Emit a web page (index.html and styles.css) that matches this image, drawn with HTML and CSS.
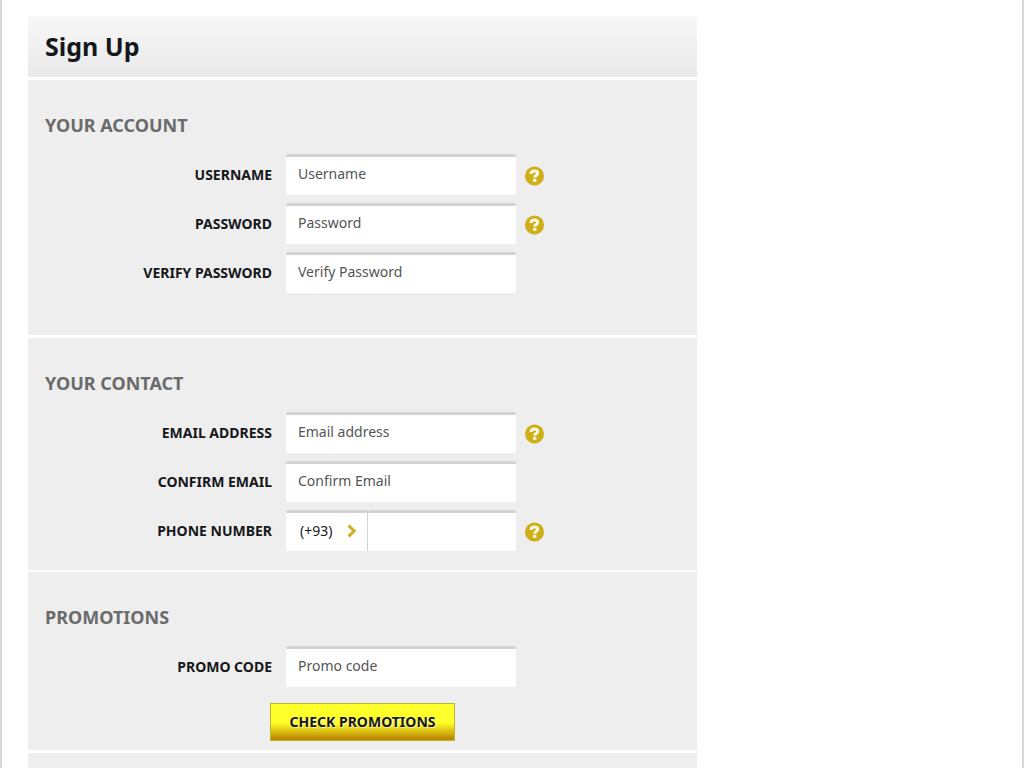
FILE: index.html
```html
<!DOCTYPE html>
<html lang="en">
<head>
<meta charset="utf-8">
<meta name="viewport" content="width=device-width, initial-scale=1">
<title>Sign Up</title>
<link rel="stylesheet" href="styles.css">
</head>
<body>
<svg class="sprite" aria-hidden="true">
  <symbol id="help" viewBox="0 0 20 20">
    <circle cx="10.5" cy="10" r="9.5" fill="#d0ae18"/>
    <path d="M7 8C7 5.8 8.5 5 10.4 5c2 0 3.3.9 3.3 2.5 0 2.1-3 2-3.1 4.1" fill="none" stroke="#fbf8e6" stroke-width="3"/>
    <path d="M9 12.8h3.4v3H9z" fill="#fbf8e6"/>
  </symbol>
</svg>
<main class="page">
  <form class="signup">
    <header class="title-bar"><h1 class="title">Sign Up</h1></header>

    <section class="panel panel-account">
      <h2 class="heading">YOUR ACCOUNT</h2>
      <div class="rows">
        <div class="row">
          <label class="label" for="username">USERNAME</label>
          <input class="field" id="username" type="text" placeholder="Username">
          <button class="help" type="button" aria-label="Username help"><svg class="help-icon"><use href="#help"/></svg></button>
        </div>
        <div class="row">
          <label class="label" for="password">PASSWORD</label>
          <input class="field" id="password" type="password" placeholder="Password">
          <button class="help" type="button" aria-label="Password help"><svg class="help-icon"><use href="#help"/></svg></button>
        </div>
        <div class="row">
          <label class="label" for="verify">VERIFY PASSWORD</label>
          <input class="field" id="verify" type="password" placeholder="Verify Password">
        </div>
      </div>
    </section>

    <section class="panel panel-contact">
      <h2 class="heading">YOUR CONTACT</h2>
      <div class="rows">
        <div class="row">
          <label class="label" for="email">EMAIL ADDRESS</label>
          <input class="field" id="email" type="email" placeholder="Email address">
          <button class="help" type="button" aria-label="Email help"><svg class="help-icon"><use href="#help"/></svg></button>
        </div>
        <div class="row">
          <label class="label" for="confirm">CONFIRM EMAIL</label>
          <input class="field" id="confirm" type="email" placeholder="Confirm Email">
        </div>
        <div class="row">
          <label class="label" for="phone">PHONE NUMBER</label>
          <div class="phone">
            <div class="prefix">
              <select class="prefix-select" aria-label="Country code">
                <option>(+93)</option>
              </select>
              <svg class="chevron" viewBox="0 0 10 14" aria-hidden="true"><path d="M1.6 1.6 7.2 7l-5.6 5.4" fill="none" stroke="#cfae22" stroke-width="3"/></svg>
            </div>
            <input class="field phone-field" id="phone" type="tel">
          </div>
          <button class="help" type="button" aria-label="Phone help"><svg class="help-icon"><use href="#help"/></svg></button>
        </div>
      </div>
    </section>

    <section class="panel panel-promo">
      <h2 class="heading">PROMOTIONS</h2>
      <div class="rows">
        <div class="row">
          <label class="label" for="promo">PROMO CODE</label>
          <input class="field" id="promo" type="text" placeholder="Promo code">
        </div>
      </div>
      <button class="check" type="button">CHECK PROMOTIONS</button>
    </section>

    <section class="panel panel-next"></section>
  </form>
</main>
</body>
</html>
```
FILE: styles.css
```css
* {
  box-sizing: border-box;
}

body {
  margin: 0;
  background: #fff;
  color: #15171a;
  font: 14px/20px "Noto Sans", "Open Sans", sans-serif;
}

.sprite {
  position: absolute;
  width: 0;
  height: 0;
}

.page {
  display: flex;
  min-height: 100vh;
  padding: 16px 26px 0;
  border: solid #d8d8d4;
  border-width: 0 2px;
}

.signup {
  display: flex;
  flex-direction: column;
  width: 100%;
  max-width: 669px;
}

.title-bar {
  padding: 14px 17px 15px;
  background: linear-gradient(#f8f8f8, #e9e9e9);
}

.title {
  margin: 0;
  font-size: 25px;
  line-height: 32px;
}

.panel {
  margin-top: 3px;
  padding: 33px 17px 0;
  background: #eee;
}

.panel-account {
  padding-bottom: 42px;
}

.panel-contact {
  padding-bottom: 19px;
}

.panel-promo {
  display: flex;
  flex-direction: column;
  margin-top: 2px;
  padding-bottom: 9px;
}

.panel-next {
  flex: 1;
  padding: 0;
}

.heading {
  margin: 0 0 17px;
  color: #6b6b6b;
  font-size: 18px;
  line-height: 24px;
}

.rows {
  display: grid;
  gap: 8px;
}

.row {
  display: grid;
  grid-template-columns: 227px 230px 20px;
  column-gap: 14px;
  align-items: center;
}

.label {
  font-weight: 700;
  text-align: right;
}

.field {
  width: 100%;
  height: 41px;
  padding: 0 12px 5px;
  border: 0;
  border-top: 3px solid #d3d3d3;
  border-radius: 2px;
  background: #fff;
  color: #15171a;
  font: inherit;
}

.field::placeholder {
  color: #555;
  opacity: 1;
}

.help {
  display: flex;
  margin: 3px 0 0 -6px;
  padding: 0;
  border: 0;
  background: none;
  cursor: pointer;
}

.help-icon {
  width: 20px;
  height: 20px;
}

.phone {
  display: flex;
}

.prefix {
  position: relative;
  flex: none;
  width: 82px;
}

.prefix-select {
  width: 100%;
  height: 41px;
  padding: 0 14px 2px;
  border: 0;
  border-top: 3px solid #d3d3d3;
  border-right: 1px solid #d3d3d3;
  border-radius: 2px 0 0 2px;
  background: #fff;
  color: #15171a;
  font: inherit;
  appearance: none;
}

.chevron {
  position: absolute;
  top: 14px;
  right: 11px;
  width: 10px;
  height: 14px;
  pointer-events: none;
}

.phone-field {
  flex: 1;
  min-width: 0;
}

.check {
  align-self: center;
  height: 38px;
  margin-top: 16px;
  padding: 0 19px;
  border: 1px solid #b9b52c;
  background: linear-gradient(#ffff2c 52%, #f0e01c 64%, #bd8a04 96%);
  color: #15171a;
  font: inherit;
  font-weight: 700;
  text-shadow: 1px 1px 1px #ffffffa0;
  cursor: pointer;
}
```
